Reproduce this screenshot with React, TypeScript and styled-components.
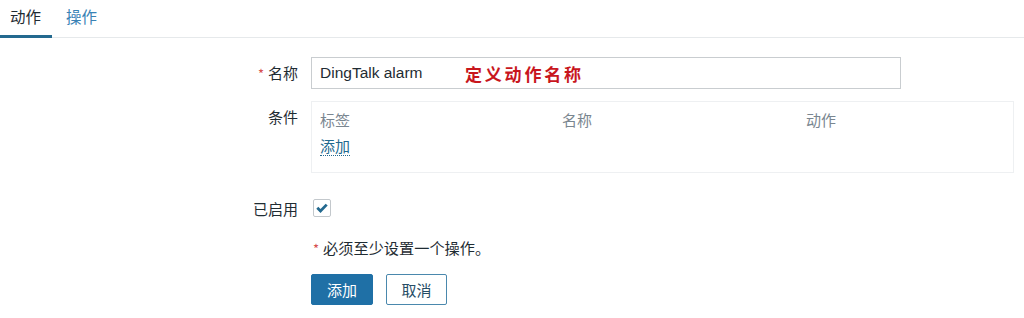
import React from "react";
import styled, { createGlobalStyle } from "styled-components";

const Global = createGlobalStyle`
  html, body { margin: 0; padding: 0; background: #ffffff; }
  body {
    font-family: "Liberation Sans", "Noto Sans CJK SC", sans-serif;
    color: #1f2c33;
    font-size: 15px;
  }
`;

const Page = styled.div`
  width: 1024px;
  height: 318px;
  overflow: hidden;
  background: #fff;
`;

const Tabs = styled.div`
  display: flex;
  gap: 4px;
  height: 37px;
  border-bottom: 1px solid #e6e9eb;
`;

const Tab = styled.div<{ $active?: boolean }>`
  display: flex;
  align-items: center;
  padding: 0 11px 3px 10px;
  font-size: 15.5px;
  font-family: "Noto Sans CJK SC", sans-serif;
  color: ${(p) => (p.$active ? "#1f2c33" : "#3a82b5")};
  border-bottom: 3px solid ${(p) => (p.$active ? "#23698f" : "transparent")};
  margin-bottom: -1px;
`;

const Form = styled.div`
  display: flex;
  flex-direction: column;
  padding-right: 10px;
`;

const Row = styled.div<{ $mt: number; $align?: string }>`
  display: grid;
  grid-template-columns: 298px 1fr;
  column-gap: 13px;
  align-items: ${(p) => p.$align || "center"};
  margin-top: ${(p) => p.$mt}px;
`;

const Label = styled.div<{ $pt?: number }>`
  text-align: right;
  font-family: "Noto Sans CJK SC", sans-serif;
  font-size: 15px;
  line-height: 20px;
  color: #1f2c33;
  padding-top: ${(p) => p.$pt || 0}px;
`;

const Star = styled.span`
  color: #d64e4e;
  font-size: 13px;
  margin-right: 4px;
`;

const InputBox = styled.div`
  display: flex;
  align-items: center;
  width: 590px;
  height: 32px;
  box-sizing: border-box;
  border: 1px solid #c9cdd0;
  padding-left: 8px;
`;

const InputText = styled.span`
  font-family: "Liberation Sans", Arial, sans-serif;
  font-size: 15.5px;
  color: #1f2c33;
  width: 145px;
`;

const Note = styled.span`
  font-family: "Noto Sans CJK SC", sans-serif;
  font-weight: 700;
  font-size: 17px;
  letter-spacing: 2.8px;
  color: #c8161d;
`;

const CondBox = styled.div`
  height: 72px;
  box-sizing: border-box;
  border: 1px solid #eef0f2;
  padding: 7px 8px 0 8px;
`;

const CondHead = styled.div`
  display: grid;
  grid-template-columns: 242px 244px 1fr;
  font-family: "Noto Sans CJK SC", sans-serif;
  font-size: 15px;
  line-height: 22px;
  color: #7a8690;
`;

const LinkText = styled.span`
  display: inline-block;
  margin-top: 6px;
  font-family: "Noto Sans CJK SC", sans-serif;
  font-size: 15px;
  line-height: 18px;
  color: #23698f;
  border-bottom: 1px dotted #23698f;
`;

const Check = styled.div`
  width: 18px;
  height: 18px;
  box-sizing: border-box;
  border: 1px solid #c3c8cc;
  border-radius: 2px;
  margin-left: 2px;
  margin-top: -2px;
  display: flex;
  align-items: center;
  justify-content: center;
`;

const Message = styled.div`
  grid-column: 2;
  font-family: "Noto Sans CJK SC", sans-serif;
  font-size: 15.2px;
  line-height: 20px;
  padding-left: 2px;
  color: #1f2c33;
`;

const Buttons = styled.div`
  grid-column: 2;
  display: flex;
  gap: 13px;
`;

const Button = styled.button<{ $primary?: boolean }>`
  height: 31px;
  width: ${(p) => (p.$primary ? 62 : 61)}px;
  box-sizing: border-box;
  border-radius: 2px;
  font-family: "Noto Sans CJK SC", sans-serif;
  font-size: 15px;
  padding: 0;
  cursor: pointer;
  background: ${(p) => (p.$primary ? "#1f70a6" : "#ffffff")};
  color: ${(p) => (p.$primary ? "#ffffff" : "#264d66")};
  border: 1px solid ${(p) => (p.$primary ? "#1f70a6" : "#4a88ad")};
`;

export default function App() {
  return (
    <Page>
      <Global />
      <Tabs>
        <Tab $active>动作</Tab>
        <Tab>操作</Tab>
      </Tabs>
      <Form>
        <Row $mt={19}>
          <Label>
            <Star>*</Star>名称
          </Label>
          <InputBox>
            <InputText>DingTalk alarm</InputText>
            <Note>定义动作名称</Note>
          </InputBox>
        </Row>
        <Row $mt={12} $align="start">
          <Label $pt={6}>条件</Label>
          <CondBox>
            <CondHead>
              <span>标签</span>
              <span>名称</span>
              <span>动作</span>
            </CondHead>
            <LinkText>添加</LinkText>
          </CondBox>
        </Row>
        <Row $mt={26}>
          <Label>已启用</Label>
          <Check>
            <svg width="12" height="10" viewBox="0 0 12 10">
              <path d="M1.3 4.8 L4.5 8 L10.7 1.6" fill="none" stroke="#23698f" strokeWidth="2.8" />
            </svg>
          </Check>
        </Row>
        <Row $mt={18}>
          <Message>
            <Star>*</Star>必须至少设置一个操作。
          </Message>
        </Row>
        <Row $mt={15}>
          <Buttons>
            <Button $primary>添加</Button>
            <Button>取消</Button>
          </Buttons>
        </Row>
      </Form>
    </Page>
  );
}
